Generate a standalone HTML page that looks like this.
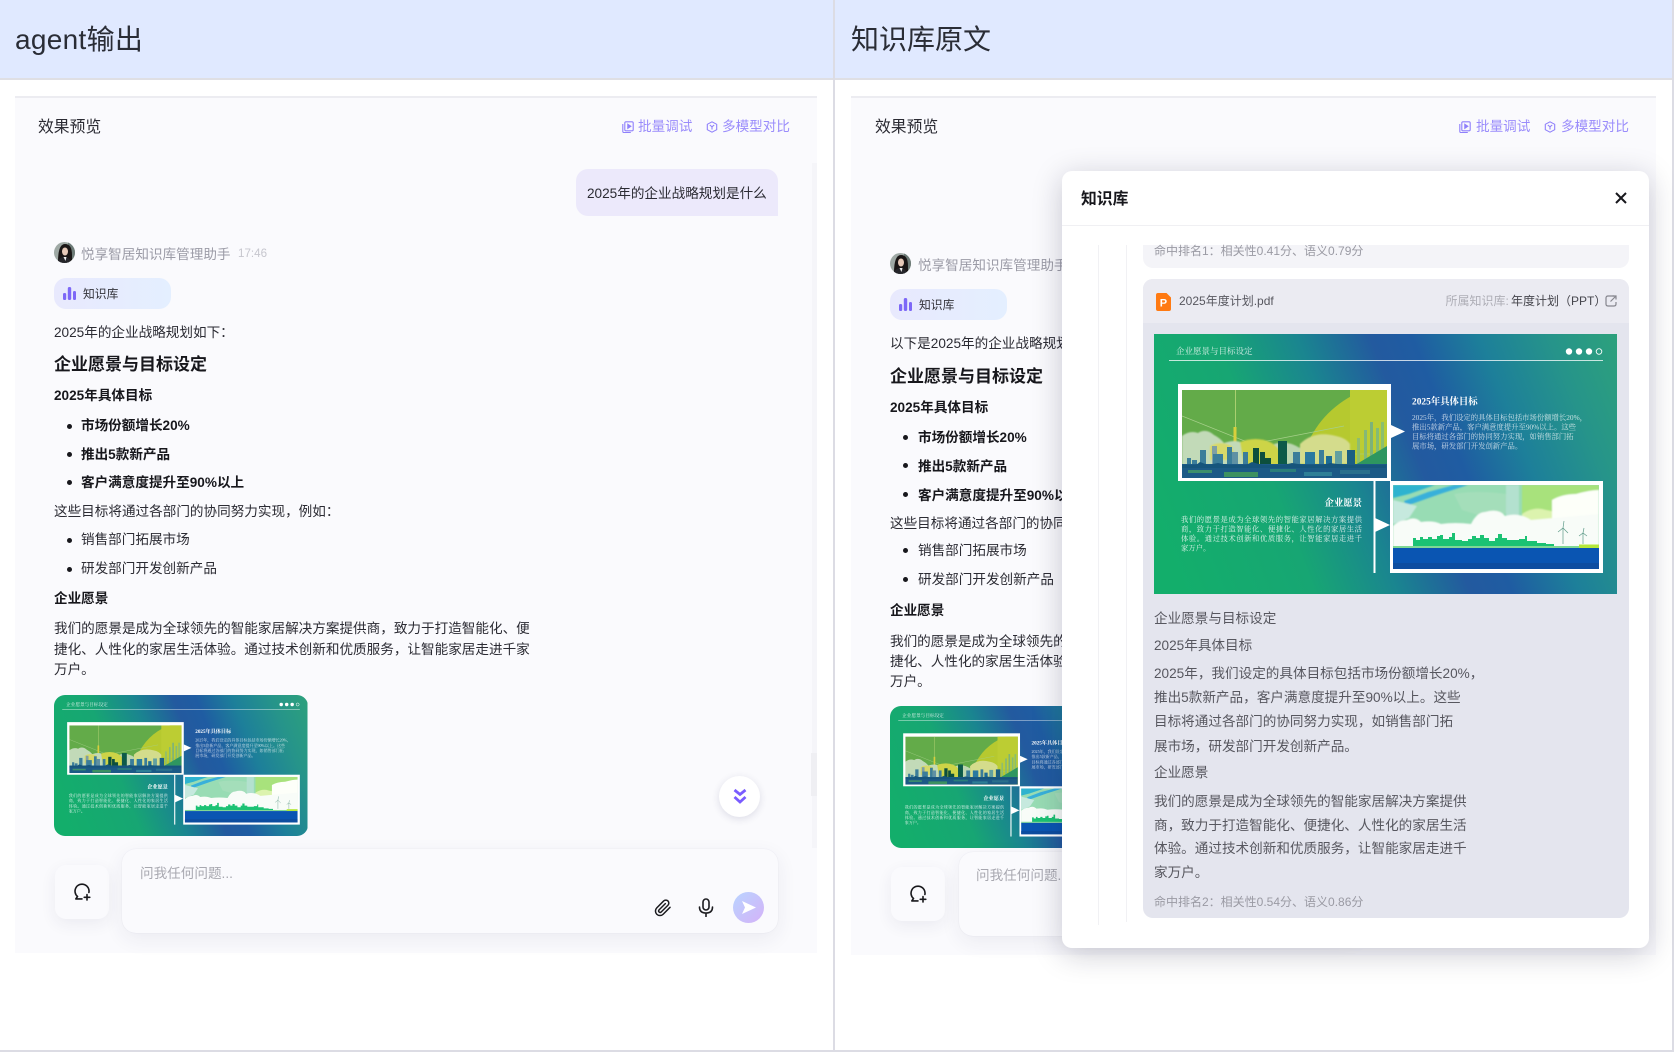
<!DOCTYPE html>
<html lang="zh"><head><meta charset="utf-8"><title>agent输出</title>
<style>
*{box-sizing:border-box}
html,body{margin:0;padding:0;background:#fff}
body{width:1674px;height:1054px;position:relative;overflow:hidden;font-family:"Liberation Sans","Noto Sans CJK SC",sans-serif;color:#2b2b33;font-size:13.6px}
.a{position:absolute}
.t{position:absolute;white-space:nowrap;line-height:20px}
.b{font-weight:700;color:#17171c}
.head{font-size:28px;line-height:40px;color:#2a2d36}
.link{color:#9a8cfb;font-size:13.6px}
.dot{position:absolute;width:5px;height:5px;border-radius:50%;background:#17171c}
.panel{position:absolute;top:96px;background:#fafafd;border-top:2px solid #ececf1}
.tag{position:absolute;width:117px;height:31px;border-radius:12px;background:linear-gradient(90deg,#e8e9fd,#e4efff)}
.bubble{position:absolute;left:576px;top:169px;width:202px;height:47px;background:#ece9fb;border-radius:12px 12px 0 12px}
.inp{position:absolute;height:84px;background:#fafafd;border-radius:14px;box-shadow:0 6px 20px rgba(40,40,90,.07),0 0 1px rgba(40,40,90,.12)}
.rb{position:absolute;width:54px;height:54px;background:#fafafd;border-radius:11px;box-shadow:0 5px 16px rgba(40,40,90,.07)}
.thumb{position:absolute;width:254px;height:142px;border-radius:11px;overflow:hidden}
.avatar{position:absolute;width:21px;height:21px;border-radius:50%;overflow:hidden}
.modal{position:absolute;left:1062px;top:171px;width:587px;height:777px;background:#fff;border-radius:10px;box-shadow:0 6px 30px rgba(20,20,50,.22);overflow:hidden}
.g{color:#57575f}
.hit{color:#9a9aa3;font-size:12px}
svg{display:block}
</style></head><body>

<svg width="0" height="0" style="position:absolute">
<defs>
<linearGradient id="sg" gradientUnits="userSpaceOnUse" x1="18" y1="232" x2="538" y2="28">
<stop offset="0" stop-color="#13ae6b"/><stop offset=".22" stop-color="#17a673"/><stop offset=".36" stop-color="#1a8590"/><stop offset=".48" stop-color="#235a9f"/><stop offset=".55" stop-color="#1f5ca2"/><stop offset=".66" stop-color="#1d7f9a"/><stop offset=".78" stop-color="#26948a"/><stop offset=".92" stop-color="#2ea479"/>
</linearGradient>
<clipPath id="c1"><rect x="28" y="56" width="205" height="88"/></clipPath>
<clipPath id="c2"><rect x="239" y="151" width="206" height="84"/></clipPath>
<filter id="soft" x="-5%" y="-5%" width="110%" height="110%"><feGaussianBlur stdDeviation=".7"/></filter>
<filter id="soft2" x="-5%" y="-5%" width="110%" height="110%"><feGaussianBlur stdDeviation=".3"/></filter>
<symbol id="slide" viewBox="0 0 463 260" preserveAspectRatio="none">
<rect width="463" height="260" fill="url(#sg)"/>
<g font-family="'Liberation Serif','Noto Serif CJK SC',serif" fill="#fff">
<text x="22" y="20" font-size="8.5" opacity=".8">企业愿景与目标设定</text>
<rect x="15" y="26" width="434" height="1" opacity=".75"/>
<circle cx="415" cy="17.5" r="3.2"/><circle cx="425" cy="17.5" r="3.2"/><circle cx="435" cy="17.5" r="3.2"/><circle cx="445" cy="17.5" r="2.8" fill="none" stroke="#fff" stroke-width=".9"/>
<text x="258" y="70.5" font-size="9.4" font-weight="700">2025年具体目标</text>
<g font-size="7.35" opacity=".75">
<text x="258" y="86">2025年，我们设定的具体目标包括市场份额增长20%，</text>
<text x="258" y="95.5">推出5款新产品，客户满意度提升至90%以上。这些</text>
<text x="258" y="105">目标将通过各部门的协同努力实现，如销售部门拓</text>
<text x="258" y="114.5">展市场，研发部门开发创新产品。</text>
</g>
<text x="208" y="172" font-size="9.4" font-weight="700" text-anchor="end">企业愿景</text>
<g font-size="7.35" opacity=".85">
<text x="27" y="188" textLength="181">我们的愿景是成为全球领先的智能家居解决方案提供</text>
<text x="27" y="197.5" textLength="181">商，致力于打造智能化、便捷化、人性化的家居生活</text>
<text x="27" y="207" textLength="181">体验。通过技术创新和优质服务，让智能家居走进千</text>
<text x="27" y="216.5">家万户。</text>
</g>
</g>
<rect x="24" y="50" width="213" height="97" fill="#fff"/>
<g clip-path="url(#c1)">
<rect x="28" y="56" width="205" height="88" fill="#63ab49"/>
<circle cx="245" cy="150" r="100" fill="#b6c92f"/>
<rect x="196" y="56" width="37" height="60" fill="#bccd33"/>
<path d="M28 82L98 110L190 92" stroke="#a6d08a" stroke-width=".7" fill="none"/>
<path d="M80 120H230" stroke="#a6d08a" stroke-width=".5"/>
<rect x="81" y="56" width="1" height="50" fill="#a9cf6f"/><rect x="79.500" y="93" width="3" height="28" fill="#d8cf3c"/>
<g filter="url(#soft2)">
<rect x="203" y="104" width="3" height="26" fill="#8fbd6e"/><rect x="210" y="96" width="3" height="36" fill="#85b877"/><rect x="216" y="88" width="3" height="42" fill="#7cb27a"/><rect x="222" y="94" width="3" height="36" fill="#84bb74"/><rect x="227" y="88" width="3" height="40" fill="#8abf6e"/>
<path d="M233 112L201 131H233Z" fill="#2e9660"/>
<g filter="url(#soft)">
<path d="M28 102q8-6 16-3q8-5 16 2q6 3 10 8q12-4 18 0l12 2v22H28Z" fill="#c2dab8"/>
<path d="M146 110q14-14 36-8q10 2 14 8v20h-50Z" fill="#d4dc8c"/>
<path d="M116 112q14-8 30 2v16h-30Z" fill="#bcd6b0"/>
<path d="M56 112q10-6 22 0l4 14H56Z" fill="#d7d96a"/>
<path d="M86 108q16-6 30 0q12 6 16 24H90Z" fill="#cdd446"/>
</g>
<g fill="#3a7d9a">
<rect x="46" y="116" width="6" height="16"/><rect x="33" y="124" width="4" height="8"/><rect x="38" y="126" width="5" height="6"/><rect x="58" y="112" width="5" height="20" fill="#7f9fa4"/><rect x="59" y="120" width="10" height="12"/><rect x="73" y="113" width="5" height="19"/><rect x="78" y="118" width="6" height="14" fill="#5e91a4"/><rect x="89" y="118" width="5" height="14"/><rect x="139" y="118" width="7" height="14"/><rect x="151" y="118" width="10" height="14" fill="#2c79a0"/><rect x="165" y="116" width="5" height="16"/><rect x="172" y="122" width="6" height="10" fill="#1f6c96"/><rect x="181" y="117" width="7" height="15" fill="#62a0a0"/>
</g>
<g fill="#0d4f3e">
<rect x="99" y="114" width="6" height="18"/><rect x="106" y="118" width="5" height="14"/><rect x="109" y="124" width="8" height="8"/><rect x="124" y="107" width="9" height="25" fill="#0e5a4a"/>
</g>
<rect x="193" y="116" width="8" height="16" fill="#1d5f82"/>
<rect x="28" y="130" width="205" height="14" fill="#1c5a86"/>
<path d="M28 131h14l4-3 8 3 10-2 10 2h18l6-3 10 3h22l8-2 12 2h20l6-2 14 2h42v3H28Z" fill="#17547c"/>
<rect x="34" y="136" width="24" height="3" fill="#3d8f6c"/><rect x="70" y="138" width="34" height="5" fill="#3c9160"/><rect x="116" y="135" width="26" height="3" fill="#2c7e7a"/><rect x="150" y="138" width="28" height="4" fill="#2f7f96"/><rect x="186" y="136" width="30" height="4" fill="#2a6f8c"/>
</g>
</g>
<path d="M237 91L251 97.5L237 104Z" fill="#fff"/>
<rect x="219.5" y="147" width="2" height="92" fill="#fff"/>
<path d="M221 184L236 191L221 198Z" fill="#fff"/>
<rect x="236" y="147" width="213" height="92" fill="#fff"/>
<g clip-path="url(#c2)">
<rect x="239" y="151" width="206" height="64" fill="#98dcb4"/>
<g filter="url(#soft)">
<path d="M239 151h42l-26 9-16 4Z" fill="#2eb3cf"/><path d="M252 172l34-12 28-9h-14l-26 7-24 9Z" fill="#38b0da"/>
<path d="M239 166l24 6-8 12-16 6Z" fill="#c6e9de"/>
<path d="M300 160q22-4 52 0l12 16-30 8-26-8Z" fill="#a4deba"/>
<path d="M352 151h13v44h-13Z" fill="#b3e1cf"/>
<path d="M368 151h77v44h-77Z" fill="#a8e27c"/>
<path d="M368 180q12-8 24-4q14 2 18 10l-8 10h-34Z" fill="#dcf3ae"/>
<path d="M398 166q10-6 24-6q14-4 23-4v46h-47Z" fill="#fdfff9"/>
<path d="M239 192q6-6 14-6q8-4 14 2q12-2 20 2q14-2 30 0q6-12 14-12q14-4 20 4q14-4 26 4l68-6v40H239Z" fill="#f8fcf8"/>
</g>
<path d="M259 212v-8h3v2h4v-3h3v2h5v-2h4v2h5v-3h3v-1h3v4h6v-2h3v-4h3v7h7v1h6v-2h4v-3h4v2h4v-3h4v3h5v3h6v-3h3v-4h4v4h5v2h12v-1h6v-3h2v5h10v2h9v1h8v3H259Z" fill="#1bc273"/>
<rect x="239" y="212" width="206" height="2" fill="#7fd894"/><rect x="425" y="210.500" width="20" height="3.500" fill="#b4e83a"/>
<rect x="239" y="214" width="206" height="21" fill="#0a55b2"/>
<rect x="239" y="229" width="206" height="6" fill="#0d4da0"/>
<g stroke="#5d9a88" stroke-width=".7" fill="none"><path d="M409 194v16M409 194l-5 4M409 194l1-7M409 194l5 5M429 199v11M429 199l-4 3M429 199l1-5M429 199l4 3"/></g>
</g>
</symbol>
<symbol id="av" viewBox="0 0 21 21">
<rect width="21" height="21" fill="#9fa9a5"/>
<rect x="14" width="7" height="21" fill="#6c7a76"/>
<path d="M4 20q0-18 7-18q7 0 7 11v8Z" fill="#1a1616"/>
<ellipse cx="11" cy="9.500" rx="3" ry="4" fill="#e6c9b8"/>
<path d="M3 21q2-6 7.500-6q5 0 7 6Z" fill="#25252a"/><path d="M9.500 15h3l-1 4Z" fill="#eee"/>
</symbol>
<symbol id="i1" viewBox="0 0 12 12"><g fill="none" stroke="#8f80fb" stroke-width="1.100"><rect x="2.800" y=".8" width="8.400" height="9" rx="1.200"/><path d="M.8 3v7.500q0 1 1 1h7"/><path d="M5.800 3.300l3 2-3 2Z" fill="#8f80fb"/></g></symbol>
<symbol id="i2" viewBox="0 0 12 12"><g fill="none" stroke="#8f80fb" stroke-width="1.100"><path d="M6 .8l4.700 2.500v5.400L6 11.200 1.300 8.700V3.300Z" stroke-linejoin="round"/><path d="M3.800 4l2.200 1.800L8.200 4M6 5.800v2.700"/></g></symbol>
<symbol id="bars" viewBox="0 0 13 13"><rect y="6" width="3.200" height="7" rx="1.400" fill="#7d68f7"/><rect x="4.800" width="3.400" height="13" rx="1.500" fill="#7d68f7"/><rect x="10" y="4" width="3" height="9" rx="1.400" fill="#7d68f7"/></symbol>
<symbol id="chat" viewBox="0 0 18 18"><g fill="none" stroke="#18181c" stroke-width="1.600" stroke-linecap="round" stroke-linejoin="round"><path d="M15.900 9.500A7 7 0 1 0 4.500 13.500L2.800 15.900H9"/><path d="M14 11.500v5.500M11.200 14.300h5.600"/></g></symbol>
</defs></svg>

<!-- headers -->
<div class="a" style="left:0;top:0;width:1674px;height:78px;background:#e0e9ff"></div>
<div class="a" style="left:0;top:78px;width:1674px;height:2px;background:#dfdfe4"></div>
<div class="a" style="left:833px;top:0;width:2px;height:1052px;background:#dcdce4"></div>
<div class="a" style="left:1672px;top:0;width:2px;height:1052px;background:#dcdce4"></div>
<div class="a" style="left:0;top:1050px;width:1674px;height:2px;background:#dcdce4"></div>
<div class="t head" style="left:15px;top:20px;letter-spacing:.3px">agent输出</div>
<div class="t head" style="left:851px;top:20px">知识库原文</div>

<!-- LEFT PANEL -->
<div class="panel" style="left:15px;width:802px;height:857px"></div>
<div class="a" style="left:812px;top:163px;width:5px;height:685px;background:#f5f5f9"></div>
<div class="a" style="left:811px;top:753px;width:6px;height:43px;background:#efeff3"></div>
<div class="t" style="left:38px;top:118px;font-size:15.800px">效果预览</div>
<svg class="a" style="left:622px;top:121px" width="12" height="12"><use href="#i1"/></svg>
<div class="t link" style="left:638px;top:117px">批量调试</div>
<svg class="a" style="left:705.500px;top:121px" width="12" height="12"><use href="#i2"/></svg>
<div class="t link" style="left:722px;top:117px">多模型对比</div>
<div class="bubble"></div>
<div class="t" style="left:587px;top:184px">2025年的企业战略规划是什么</div>
<svg class="avatar" style="left:54px;top:242px"><use href="#av"/></svg>
<div class="t" style="left:81px;top:245px;color:#9b9ba6">悦享智居知识库管理助手</div>
<div class="t" style="left:238px;top:244px;color:#c6c6ce;font-size:11.600px">17:46</div>
<div class="tag" style="left:54px;top:278px"></div>
<svg class="a" style="left:63px;top:287px" width="13" height="13"><use href="#bars"/></svg>
<div class="t" style="left:83px;top:284px;font-size:11.800px;color:#33333a">知识库</div>
<div class="t" style="left:54px;top:323px">2025年的企业战略规划如下：</div>
<div class="t b" style="left:54px;top:355px;font-size:17px">企业愿景与目标设定</div>
<div class="t b" style="left:54px;top:386px">2025年具体目标</div>
<div class="dot" style="left:67px;top:423.500px"></div><div class="t b" style="left:81px;top:416px">市场份额增长20%</div>
<div class="dot" style="left:67px;top:452px"></div><div class="t b" style="left:81px;top:444.500px">推出5款新产品</div>
<div class="dot" style="left:67px;top:480px"></div><div class="t b" style="left:81px;top:472.500px">客户满意度提升至90%以上</div>
<div class="t" style="left:54px;top:502px">这些目标将通过各部门的协同努力实现，例如：</div>
<div class="dot" style="left:67px;top:537.500px"></div><div class="t" style="left:81px;top:530px">销售部门拓展市场</div>
<div class="dot" style="left:67px;top:566.500px"></div><div class="t" style="left:81px;top:558.500px">研发部门开发创新产品</div>
<div class="t b" style="left:54px;top:589px">企业愿景</div>
<div class="t" style="left:54px;top:619px">我们的愿景是成为全球领先的智能家居解决方案提供商，致力于打造智能化、便</div>
<div class="t" style="left:54px;top:640px">捷化、人性化的家居生活体验。通过技术创新和优质服务，让智能家居走进千家</div>
<div class="t" style="left:54px;top:660px">万户。</div>
<svg class="thumb" style="left:54px;top:695px;height:141px;width:253.500px"><use href="#slide" width="253.500" height="141"/></svg>
<div class="a" style="left:719px;top:776px;width:41px;height:41px;border-radius:50%;background:#fff;box-shadow:0 2px 8px rgba(40,40,90,.14)"></div>
<svg class="a" style="left:733px;top:788px" width="14" height="17" fill="none" stroke="#7a5cff" stroke-width="2.800"><path d="M1.500 2L7 6.500L12.500 2M1.500 9L7 14L12.500 9"/></svg>
<div class="rb" style="left:55px;top:865px"></div>
<svg class="a" style="left:73px;top:883px" width="18" height="18"><use href="#chat"/></svg>
<div class="inp" style="left:122px;top:849px;width:656px"></div>
<div class="t" style="left:140px;top:864px;color:#a8a8b0">问我任何问题...</div>
<svg class="a" style="left:654px;top:898px" width="18" height="20" viewBox="0 0 24 24" fill="none" stroke="#1c1c20" stroke-width="2" stroke-linecap="round" stroke-linejoin="round"><path d="M21.400 11.100l-9.200 9.200a6 6 0 0 1-8.500-8.500l9.200-9.200a4 4 0 0 1 5.700 5.700l-9.200 9.200a2 2 0 0 1-2.800-2.800l8.500-8.500"/></svg>
<svg class="a" style="left:698px;top:898px" width="16" height="19" viewBox="0 0 16 19" fill="none" stroke="#1c1c20" stroke-width="1.600" stroke-linecap="round"><rect x="5" y="1" width="6" height="11" rx="3"/><path d="M1.500 9q0 6 6.500 6t6.500-6M8 15v3.500"/></svg>
<div class="a" style="left:733px;top:892px;width:31px;height:31px;border-radius:50%;background:linear-gradient(135deg,#b9d4ff,#d4b2f8)"></div>
<svg class="a" style="left:741px;top:900px" width="16" height="15"><path d="M1 1L15 7.500L1 14L4 7.500Z" fill="#fff"/></svg>

<!-- RIGHT PANEL -->
<div class="panel" style="left:851px;width:805px;height:859px"></div>
<div class="t" style="left:875px;top:118px;font-size:15.800px">效果预览</div>
<svg class="a" style="left:1459px;top:121px" width="12" height="12"><use href="#i1"/></svg>
<div class="t link" style="left:1476px;top:117px">批量调试</div>
<svg class="a" style="left:1544px;top:121px" width="12" height="12"><use href="#i2"/></svg>
<div class="t link" style="left:1561px;top:117px">多模型对比</div>
<svg class="avatar" style="left:890px;top:253px"><use href="#av"/></svg>
<div class="t" style="left:918px;top:256px;color:#9b9ba6">悦享智居知识库管理助手</div>
<div class="tag" style="left:890px;top:289px"></div>
<svg class="a" style="left:899px;top:298px" width="13" height="13"><use href="#bars"/></svg>
<div class="t" style="left:919px;top:295px;font-size:11.800px;color:#33333a">知识库</div>
<div class="t" style="left:890px;top:334px">以下是2025年的企业战略规划如下：</div>
<div class="t b" style="left:890px;top:367px;font-size:17px">企业愿景与目标设定</div>
<div class="t b" style="left:890px;top:398px">2025年具体目标</div>
<div class="dot" style="left:903px;top:434.500px"></div><div class="t b" style="left:918px;top:428px">市场份额增长20%</div>
<div class="dot" style="left:903px;top:463px"></div><div class="t b" style="left:918px;top:457px">推出5款新产品</div>
<div class="dot" style="left:903px;top:492px"></div><div class="t b" style="left:918px;top:485.500px">客户满意度提升至90%以上</div>
<div class="t" style="left:890px;top:513.500px">这些目标将通过各部门的协同努力实现，例如：</div>
<div class="dot" style="left:903px;top:548px"></div><div class="t" style="left:918px;top:541px">销售部门拓展市场</div>
<div class="dot" style="left:903px;top:576.500px"></div><div class="t" style="left:918px;top:570px">研发部门开发创新产品</div>
<div class="t b" style="left:890px;top:601px">企业愿景</div>
<div class="t" style="left:890px;top:631.500px">我们的愿景是成为全球领先的智能家居解决方案提供商，致力于打造智能化、便</div>
<div class="t" style="left:890px;top:651.500px">捷化、人性化的家居生活体验。通过技术创新和优质服务，让智能家居走进千家</div>
<div class="t" style="left:890px;top:672px">万户。</div>
<svg class="thumb" style="left:890px;top:706px"><use href="#slide" width="254" height="142"/></svg>
<div class="rb" style="left:891px;top:867px"></div>
<svg class="a" style="left:909px;top:885px" width="18" height="18"><use href="#chat"/></svg>
<div class="inp" style="left:959px;top:852px;width:400px"></div>
<div class="t" style="left:976px;top:866px;color:#a8a8b0">问我任何问题...</div>

<!-- MODAL -->
<div class="modal">
 <div class="t b" style="left:19px;top:19px;font-size:15.800px">知识库</div>
 <svg class="a" style="left:553px;top:21px" width="12" height="12" fill="none" stroke="#17171c" stroke-width="2"><path d="M1 1L11 11M11 1L1 11"/></svg>
 <div class="a" style="left:0;top:54px;width:587px;height:1px;background:#f0f0f3"></div>
 <div class="a" style="left:36px;top:74px;width:1px;height:680px;background:#f1f1f4"></div>
 <div class="a" style="left:64px;top:74px;width:1px;height:677px;background:#f1f1f4"></div>
 <div class="a" style="left:80.500px;top:74px;width:486.500px;height:23px;background:#f4f4f8;border-radius:0 0 10px 10px"></div>
 <div class="t hit" style="left:92px;top:70px">命中排名1：相关性0.41分、语义0.79分</div>
 <div class="a" style="left:80.500px;top:108px;width:486.500px;height:639px;background:#e4e5ee;border-radius:10px;overflow:hidden">
  <div class="a" style="left:0;top:0;width:100%;height:44px;background:#ebebf2"></div>
 </div>
 <svg class="a" style="left:94px;top:122px" width="15" height="18" viewBox="0 0 15 18"><path d="M2 0H10.500L15 4.500V16q0 2-2 2H2q-2 0-2-2V2q0-2 2-2Z" fill="#ff7a12"/><text x="3.800" y="13.500" font-size="11" font-weight="700" fill="#fff" font-family="'Liberation Sans',sans-serif">P</text></svg>
 <div class="t g" style="left:117px;top:120px;font-size:12px">2025年度计划.pdf</div>
 <div class="t" style="left:383.500px;top:120px;font-size:12px;color:#aeaeb6">所属知识库:</div>
 <div class="t g" style="left:449px;top:120px;font-size:12px;color:#45454c">年度计划（PPT）</div>
 <svg class="a" style="left:543px;top:124px" width="12" height="12" fill="none" stroke="#86868e" stroke-width="1.200"><path d="M9 1H3Q1 1 1 3V9Q1 11 3 11H9Q11 11 11 9V7"/><path d="M5.500 6.500L11 1M7.500 1H11V4.500"/></svg>
 <svg class="a" style="left:92px;top:163px" width="463" height="260"><use href="#slide" width="463" height="260"/></svg>
 <div class="t g" style="left:92px;top:437.500px">企业愿景与目标设定</div>
 <div class="t g" style="left:92px;top:465px">2025年具体目标</div>
 <div class="t g" style="left:92px;top:493px">2025年，我们设定的具体目标包括市场份额增长20%，</div>
 <div class="t g" style="left:92px;top:517px">推出5款新产品，客户满意度提升至90%以上。这些</div>
 <div class="t g" style="left:92px;top:541px">目标将通过各部门的协同努力实现，如销售部门拓</div>
 <div class="t g" style="left:92px;top:565.500px">展市场，研发部门开发创新产品。</div>
 <div class="t g" style="left:92px;top:592px">企业愿景</div>
 <div class="t g" style="left:92px;top:621px">我们的愿景是成为全球领先的智能家居解决方案提供</div>
 <div class="t g" style="left:92px;top:645px">商，致力于打造智能化、便捷化、人性化的家居生活</div>
 <div class="t g" style="left:92px;top:668px">体验。通过技术创新和优质服务，让智能家居走进千</div>
 <div class="t g" style="left:92px;top:692px">家万户。</div>
 <div class="t hit" style="left:92px;top:721px">命中排名2：相关性0.54分、语义0.86分</div>
</div>
</body></html>
